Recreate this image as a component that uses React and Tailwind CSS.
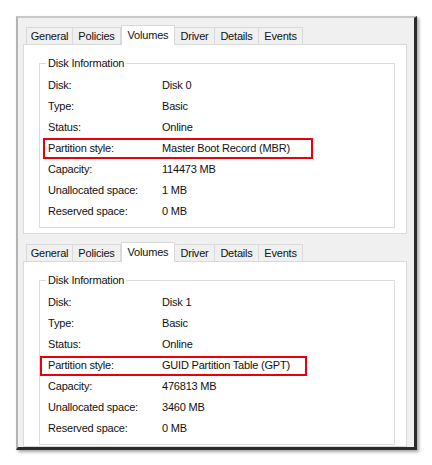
import React from "react";

const tabs = [
  ["General", 47],
  ["Policies", 48],
  ["Volumes", 54],
  ["Driver", 40],
  ["Details", 44],
  ["Events", 44],
];

function Tabs() {
  return (
    <div className="flex items-end h-[20px] pl-[3px]">
      {tabs.map(([t, w]) =>
        t === "Volumes" ? (
          <div
            key={t}
            className="relative z-10 -mb-px h-[20px] bg-white border border-b-0 border-[#d9d9d9] flex items-center justify-center"
            style={{ width: w }}
          >
            {t}
          </div>
        ) : (
          <div
            key={t}
            className="h-[17px] bg-[#f0f0f0] border border-b-0 border-l-0 first:border-l border-[#dadada] flex items-center justify-center"
            style={{ width: w }}
          >
            {t}
          </div>
        )
      )}
    </div>
  );
}

function Row({ label, value, hl }) {
  return (
    <div className="relative flex items-center h-[21px]">
      <div className="w-[122px] pl-[8px] shrink-0">{label}</div>
      <div>{value}</div>
      {hl ? (
        <span
          className="absolute border-2 border-[#e8000d] pointer-events-none"
          style={{ left: hl.l, top: hl.t, width: hl.w, height: hl.h }}
        />
      ) : null}
    </div>
  );
}

function Panel({ rows, hl, h, gt }) {
  return (
    <div
      className="bg-white border border-[#d9d9d9] pl-[15px] pr-[11px]"
      style={{ height: h, paddingTop: gt }}
    >
      <fieldset className="border border-[#dcdcdc] px-0 pb-[5px]">
        <legend className="ml-[6px] px-[2px] leading-[16px]">Disk Information</legend>
        <div className="pt-[4px]">
          {rows.map(([l, v], i) => (
            <Row key={l} label={l} value={v} hl={i === 3 ? hl : null} />
          ))}
        </div>
      </fieldset>
    </div>
  );
}

export default function App() {
  const rows1 = [
    ["Disk:", "Disk 0"],
    ["Type:", "Basic"],
    ["Status:", "Online"],
    ["Partition style:", "Master Boot Record (MBR)"],
    ["Capacity:", "114473 MB"],
    ["Unallocated space:", "1 MB"],
    ["Reserved space:", "0 MB"],
  ];
  const rows2 = [
    ["Disk:", "Disk 1"],
    ["Type:", "Basic"],
    ["Status:", "Online"],
    ["Partition style:", "GUID Partition Table (GPT)"],
    ["Capacity:", "476813 MB"],
    ["Unallocated space:", "3460 MB"],
    ["Reserved space:", "0 MB"],
  ];
  return (
    <div
      className="w-[432px] h-[465px] bg-white pt-[16px] pl-[16px] text-[11px] tracking-[-0.2px] text-[#111]"
      style={{ fontFamily: '"Liberation Sans", Arial, sans-serif' }}
    >
      <div className="w-[401px] h-[434px] bg-[#f0f0f0] border-l-2 border-t-2 border-l-[#b4b4b4] border-t-[#c8c8c8] border-r-[3px] border-b-[3px] border-r-[#2b2b2b] border-b-[#2b2b2b] shadow-[2px_2px_3px_rgba(0,0,0,0.35)] pl-[5px] pr-[7px] pt-[6px]">
        <Tabs />
        <Panel rows={rows1} hl={{ l: 3, t: 0, w: 270, h: 21 }} h={190} gt={10} />
        <div className="h-[7px]" />
        <Tabs />
        <Panel rows={rows2} hl={{ l: 0, t: 1, w: 267, h: 20 }} h={186} gt={10} />
      </div>
    </div>
  );
}
